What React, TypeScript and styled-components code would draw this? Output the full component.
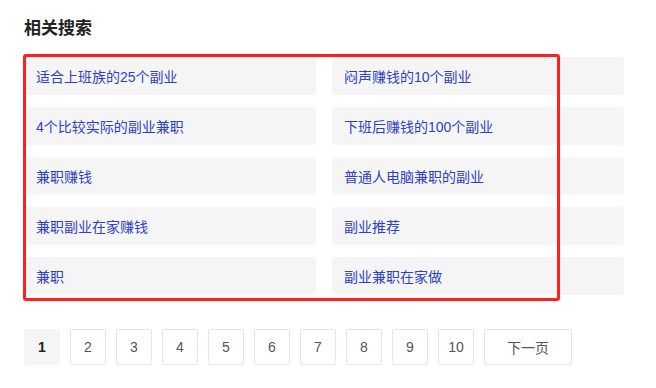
import React from 'react';
import styled, { createGlobalStyle } from 'styled-components';

const searches = [
  '适合上班族的25个副业',
  '闷声赚钱的10个副业',
  '4个比较实际的副业兼职',
  '下班后赚钱的100个副业',
  '兼职赚钱',
  '普通人电脑兼职的副业',
  '兼职副业在家赚钱',
  '副业推荐',
  '兼职',
  '副业兼职在家做',
];

const pages = [1, 2, 3, 4, 5, 6, 7, 8, 9, 10];

const GlobalStyle = createGlobalStyle`
  body {
    margin: 0;
    background: #fff;
    font-family: Arial, "Liberation Sans", "Noto Sans CJK SC", sans-serif;
  }
`;

const Page = styled.div`
  padding: 17px 24px 0;
`;

const Title = styled.h3`
  margin: 0;
  font-size: 17px;
  line-height: 24px;
  font-weight: bold;
  color: #222;
`;

const GridWrap = styled.div`
  position: relative;
  margin-top: 16px;
  width: 600px;
`;

const Grid = styled.div`
  display: grid;
  grid-template-columns: 292px 292px;
  grid-auto-rows: 38px;
  column-gap: 16px;
  row-gap: 12px;
`;

const Item = styled.a`
  display: flex;
  align-items: center;
  padding: 0 12px;
  background: #f5f5f5;
  border-radius: 4px;
  color: #2e40c9;
  font-size: 14px;
  text-decoration: none;
  white-space: nowrap;
`;

const Highlight = styled.div`
  position: absolute;
  left: -1px;
  top: -3px;
  width: 537px;
  height: 247px;
  box-sizing: border-box;
  border: 3px solid #ff1f1f;
  border-radius: 3px;
  pointer-events: none;
`;

const Pager = styled.div`
  display: flex;
  gap: 10px;
  margin-top: 34px;
`;

const PageBtn = styled.a<{ active?: boolean; wide?: boolean }>`
  display: flex;
  align-items: center;
  justify-content: center;
  box-sizing: border-box;
  width: ${({ wide }) => (wide ? '88px' : '36px')};
  height: 36px;
  border: 1px solid ${({ active }) => (active ? '#f5f5f5' : '#e6e6e6')};
  border-radius: 2px;
  background: ${({ active }) => (active ? '#f5f5f5' : '#fff')};
  color: ${({ active }) => (active ? '#222' : '#555')};
  font-weight: ${({ active }) => (active ? 'bold' : 'normal')};
  font-size: 14px;
  text-decoration: none;
`;

const App = () => {
  return (
    <>
      <GlobalStyle />
      <Page>
        <Title>相关搜索</Title>
        <GridWrap>
          <Grid>
            {searches.map((s) => (
              <Item key={s}>{s}</Item>
            ))}
          </Grid>
          <Highlight />
        </GridWrap>
        <Pager>
          {pages.map((p) => (
            <PageBtn key={p} active={p === 1}>
              {p}
            </PageBtn>
          ))}
          <PageBtn wide>下一页</PageBtn>
        </Pager>
      </Page>
    </>
  );
};

export default App;
